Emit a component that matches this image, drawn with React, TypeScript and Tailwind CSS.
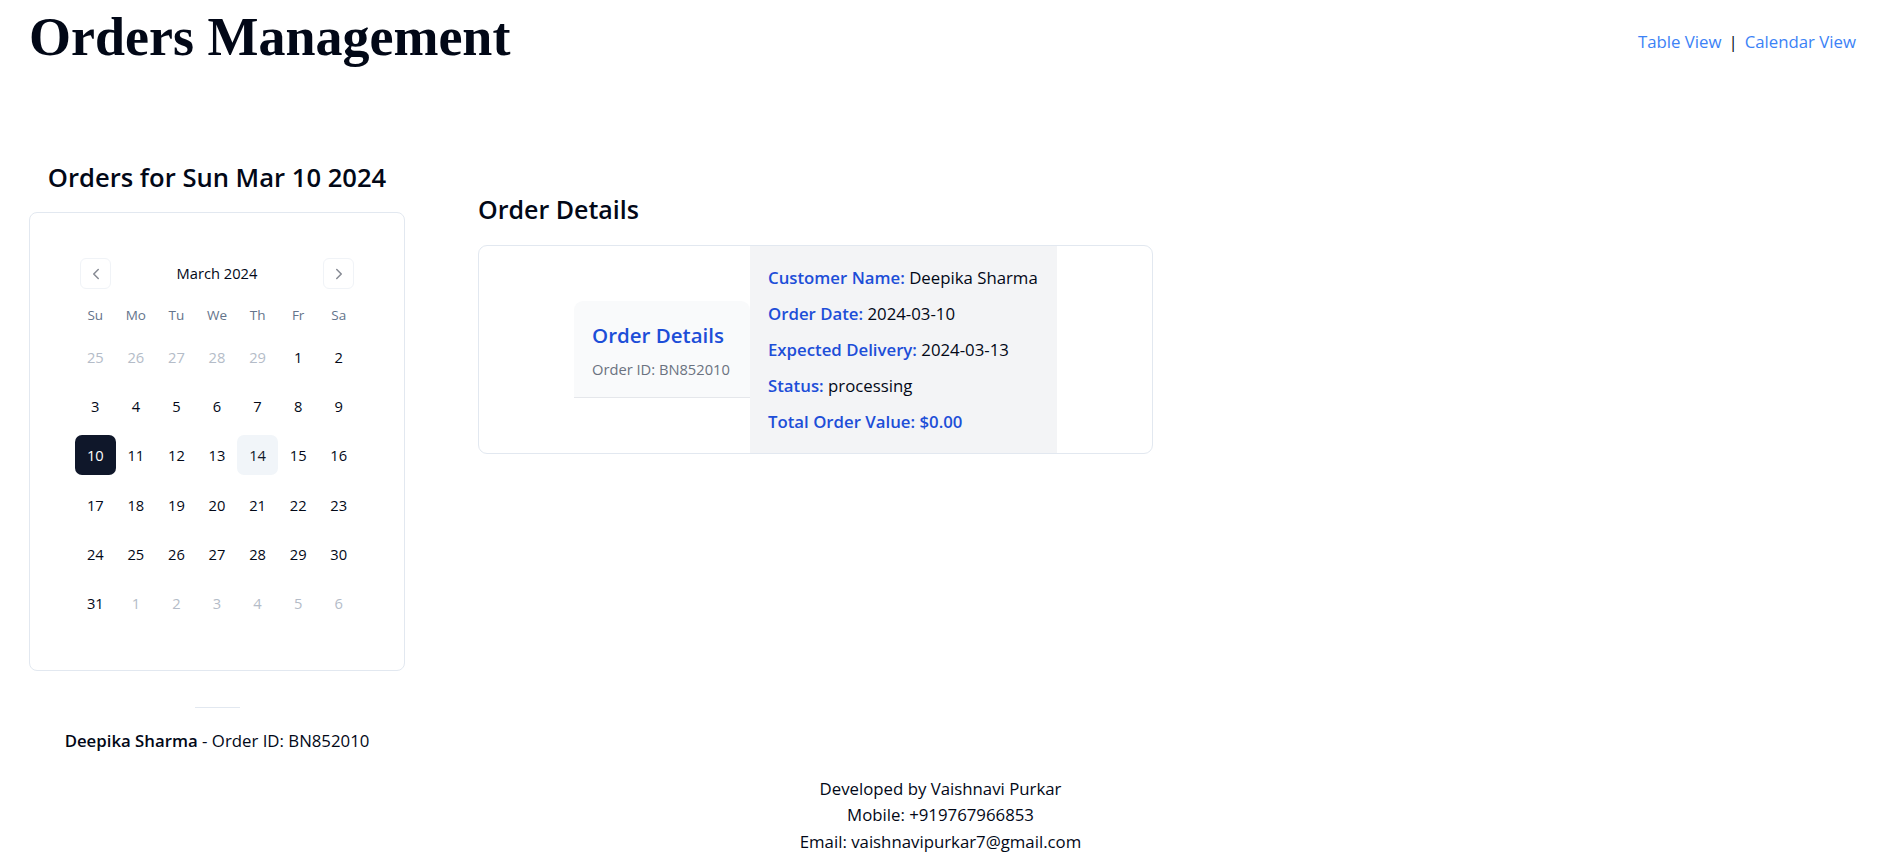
import React from 'react';
import { ChevronLeft, ChevronRight } from 'lucide-react';

// ── Data ────────────────────────────────────────────────────────────────────
const WEEKDAYS = ['Su', 'Mo', 'Tu', 'We', 'Th', 'Fr', 'Sa'];

type Day = { n: number; outside?: boolean };

const WEEKS: Day[][] = [
  [{ n: 25, outside: true }, { n: 26, outside: true }, { n: 27, outside: true }, { n: 28, outside: true }, { n: 29, outside: true }, { n: 1 }, { n: 2 }],
  [{ n: 3 }, { n: 4 }, { n: 5 }, { n: 6 }, { n: 7 }, { n: 8 }, { n: 9 }],
  [{ n: 10 }, { n: 11 }, { n: 12 }, { n: 13 }, { n: 14 }, { n: 15 }, { n: 16 }],
  [{ n: 17 }, { n: 18 }, { n: 19 }, { n: 20 }, { n: 21 }, { n: 22 }, { n: 23 }],
  [{ n: 24 }, { n: 25 }, { n: 26 }, { n: 27 }, { n: 28 }, { n: 29 }, { n: 30 }],
  [{ n: 31 }, { n: 1, outside: true }, { n: 2, outside: true }, { n: 3, outside: true }, { n: 4, outside: true }, { n: 5, outside: true }, { n: 6, outside: true }],
];

const SELECTED = 10;
const TODAY = 14;

const FONT = "'Open Sans', 'Noto Sans', sans-serif";

// ── Calendar ────────────────────────────────────────────────────────────────
const Calendar: React.FC = () => (
  <div className="w-[284px]">
    {/* caption + nav */}
    <div className="relative flex items-center justify-center h-[31px]">
      <button className="absolute left-[5px] top-0 w-[31px] h-[31px] rounded-[6px] border border-[#e2e8f0] flex items-center justify-center text-[#0f172a] opacity-50">
        <ChevronLeft size={18} strokeWidth={2} />
      </button>
      <span className="text-[14.7px] font-medium text-[#020817]">March 2024</span>
      <button className="absolute right-[5px] top-0 w-[31px] h-[31px] rounded-[6px] border border-[#e2e8f0] flex items-center justify-center text-[#0f172a] opacity-50">
        <ChevronRight size={18} strokeWidth={2} />
      </button>
    </div>

    {/* weekday header */}
    <div className="grid grid-cols-7 mt-[16px] h-[20px] items-center">
      {WEEKDAYS.map(d => (
        <span key={d} className="text-center text-[13.5px] text-[#64748b] leading-[20px]">
          {d}
        </span>
      ))}
    </div>

    {/* days */}
    <div className="flex flex-col gap-[9.2px] mt-[12px]">
      {WEEKS.map((week, wi) => (
        <div key={wi} className="grid grid-cols-7">
          {week.map((d, di) => {
            const selected = !d.outside && d.n === SELECTED;
            const today = !d.outside && d.n === TODAY;
            return (
              <div
                key={di}
                className={`h-[40px] flex items-center justify-center rounded-[7px] text-[14.7px]
                  ${selected ? 'bg-[#0f172a] text-white' : ''}
                  ${today ? 'bg-[#f1f5f9] text-[#0f172a]' : ''}
                  ${d.outside ? 'text-[#b4bcc8]' : ''}
                  ${!selected && !today && !d.outside ? 'text-[#020817]' : ''}`}
              >
                {d.n}
              </div>
            );
          })}
        </div>
      ))}
    </div>
  </div>
);

// ── Order details card ──────────────────────────────────────────────────────
const DetailRow: React.FC<{ label: string; value?: string }> = ({ label, value }) => (
  <p className="leading-[27px] text-[16.8px]">
    <span className="font-semibold text-[#1d4ed8]">{label}:</span>
    {value !== undefined && <span className="text-[#020817]"> {value}</span>}
  </p>
);

const OrderCard: React.FC = () => (
  <div className="w-[675px] rounded-[9px] border border-[#e2e8f0] flex justify-center">
    <div className="self-center w-[176px] bg-[#f9fafb] rounded-t-[9px] border-b border-[#e5e7eb] px-[18px] pt-[19px] pb-[17px]">
      <h3 className="text-[20.5px] leading-[30px] font-semibold text-[#1d4ed8]">Order Details</h3>
      <p className="mt-[8px] text-[14.7px] leading-[22px] text-[#6b7280]">Order ID: BN852010</p>
    </div>
    <div className="w-[307px] bg-[#f3f4f6] px-[18px] py-[18px] flex flex-col gap-[9px]">
      <DetailRow label="Customer Name" value="Deepika Sharma" />
      <DetailRow label="Order Date" value="2024-03-10" />
      <DetailRow label="Expected Delivery" value="2024-03-13" />
      <DetailRow label="Status" value="processing" />
      <p className="leading-[27px] text-[16.8px] font-semibold text-[#1d4ed8]">Total Order Value: $0.00</p>
    </div>
  </div>
);

// ── Page ────────────────────────────────────────────────────────────────────
export default function App() {
  return (
    <div className="min-h-screen bg-white text-[#020817]" style={{ fontFamily: FONT }}>
      {/* Header */}
      <header className="flex justify-between items-start pl-[29px] pr-[25px] pt-[10px]">
        <h1
          className="text-[54px] leading-none font-bold text-[#020817]"
          style={{ fontFamily: "'Liberation Serif', 'Times New Roman', serif" }}
        >
          Orders Management
        </h1>
        <nav className="mt-[18px] text-[16.8px] leading-[27px] flex items-center">
          <a className="text-[#3b82f6] cursor-pointer">Table View</a>
          <span className="mx-[7px] text-[#020817]">|</span>
          <a className="text-[#3b82f6] cursor-pointer">Calendar View</a>
        </nav>
      </header>

      {/* Main */}
      <main className="flex items-start pl-[29px] mt-[96px] gap-[73px]">
        {/* Left column */}
        <section className="w-[376px] flex flex-col items-center">
          <h2 className="text-[25.6px] leading-[36px] font-semibold">Orders for Sun Mar 10 2024</h2>
          <div className="mt-[16px] w-full rounded-[8px] border border-[#e2e8f0] pt-[45px] px-[45px] pb-[47px] flex justify-center">
            <Calendar />
          </div>
          <div className="mt-[36px] w-[45px] h-px bg-[#e2e8f0]" />
          <p className="mt-[19px] text-[16.8px] leading-[27px]">
            <span className="font-semibold">Deepika Sharma</span> - Order ID: BN852010
          </p>
        </section>

        {/* Right column */}
        <section className="mt-[31px]">
          <h2 className="text-[25px] leading-[36px] font-semibold">Order Details</h2>
          <div className="mt-[18px]">
            <OrderCard />
          </div>
        </section>
      </main>

      {/* Footer */}
      <footer className="mt-[22px] text-center text-[16.8px] leading-[26.5px]">
        <p>Developed by Vaishnavi Purkar</p>
        <p>Mobile: +919767966853</p>
        <p>Email: vaishnavipurkar7@gmail.com</p>
      </footer>
    </div>
  );
}
